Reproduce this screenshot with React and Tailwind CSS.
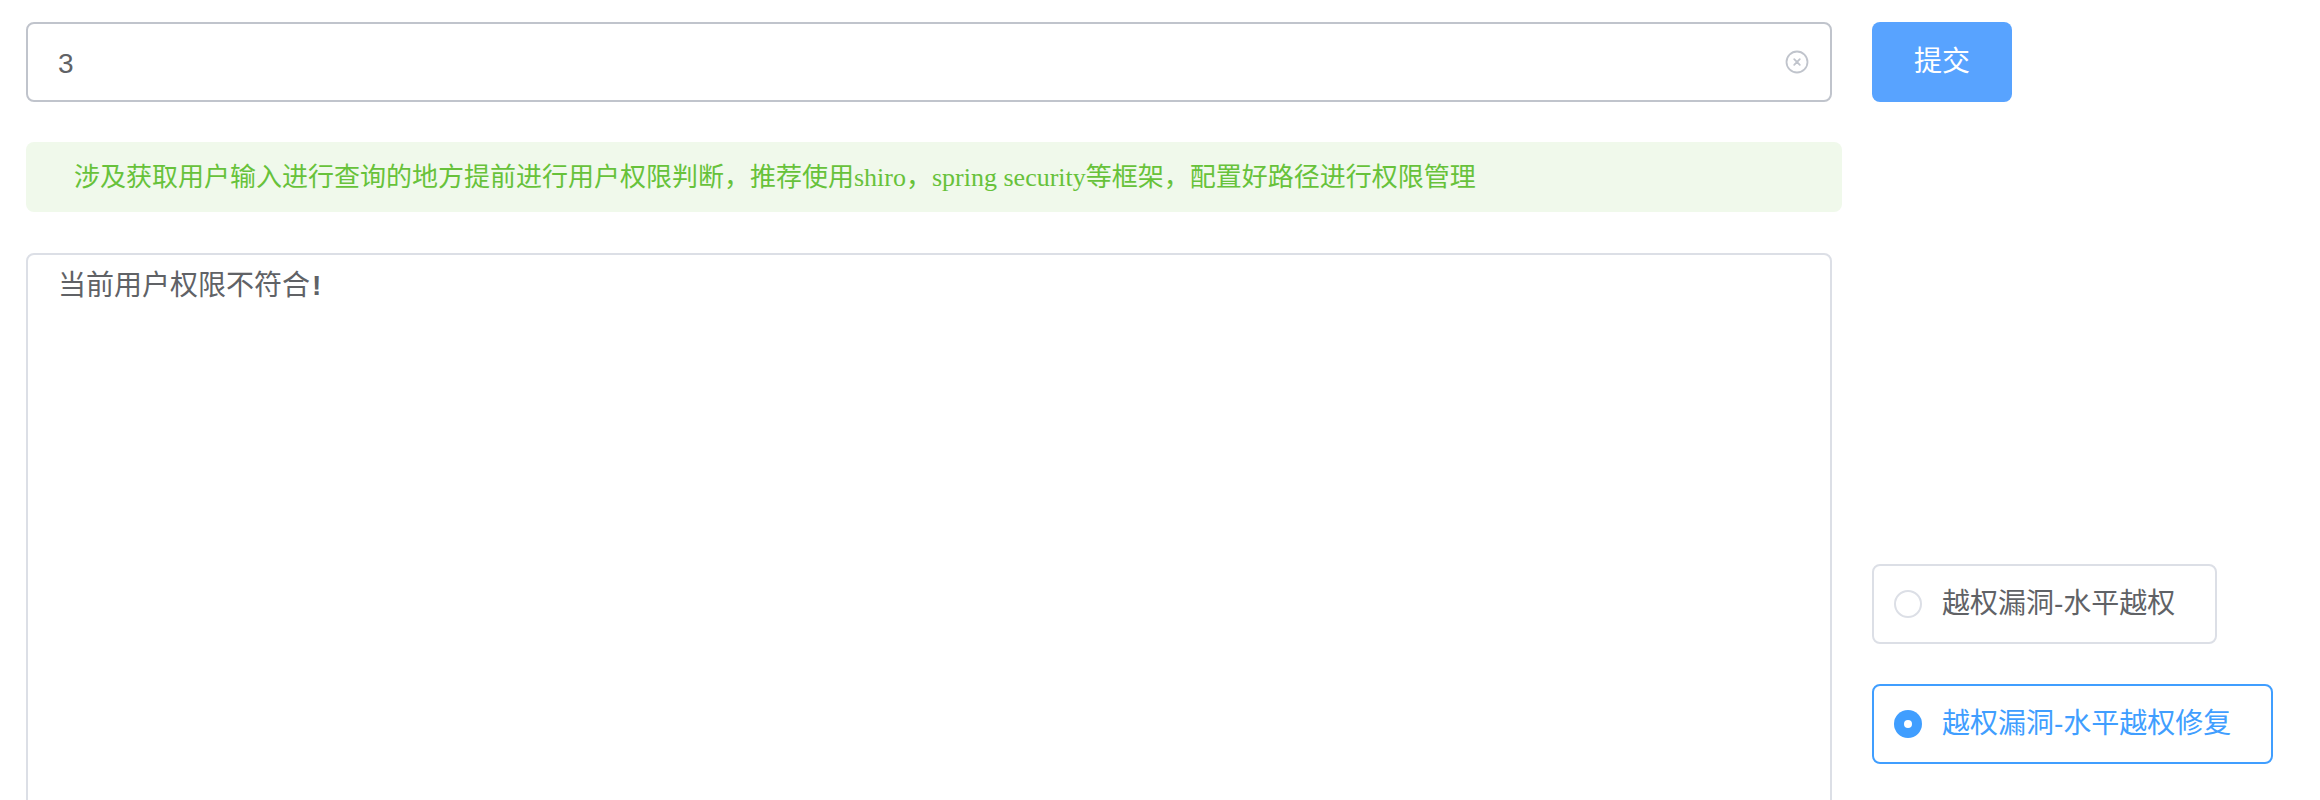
import React from "react";

const sans = { fontFamily: '"Helvetica Neue", "Liberation Sans", Arial, "Noto Sans CJK SC", sans-serif' };
const serif = { fontFamily: '"Liberation Serif", "Noto Sans CJK SC", serif' };

function ClearIcon() {
  return (
    <svg width="24" height="24" viewBox="0 0 24 24" fill="none" stroke="#c0c4cc" strokeWidth="1.8">
      <circle cx="12" cy="12" r="10.5" />
      <path d="M9.2 9.2 L14.8 14.8 M14.8 9.2 L9.2 14.8" strokeLinecap="round" />
    </svg>
  );
}

function Radio({ checked, label }) {
  return (
    <label
      className={`flex items-center h-[80px] pl-[20px] pr-[40px] rounded-[8px] border-2 w-fit ${
        checked ? "border-[#409eff]" : "border-[#dcdfe6]"
      }`}
    >
      <span
        className={`flex items-center justify-center w-[28px] h-[28px] rounded-full ${
          checked ? "bg-[#409eff]" : "border-2 border-[#dcdfe6] bg-white"
        }`}
      >
        {checked && <span className="block w-[8px] h-[8px] rounded-full bg-white" />}
      </span>
      <span
        className={`ml-[20px] text-[28px] leading-none ${checked ? "text-[#409eff]" : "text-[#606266]"}`}
      >
        {label}
      </span>
    </label>
  );
}

export default function App() {
  return (
    <div className="w-[2320px] h-[800px] overflow-hidden bg-white flex pl-[26px] pt-[22px]" style={sans}>
      <div className="flex flex-col w-[1816px] shrink-0">
        <div className="shrink-0 w-[1806px] h-[80px] border-2 border-[#c0c4cc] rounded-[8px] flex items-center pl-[30px] pr-[21px]">
          <span className="flex-1 text-[28px] text-[#606266] pt-[3px]">3</span>
          <ClearIcon />
        </div>
        <div className="shrink-0 mt-[40px] w-[1816px] h-[70px] bg-[#f0f9eb] rounded-[8px] flex items-center px-[48px]">
          <span className="text-[26px] text-[#67c23a]" style={serif}>
            涉及获取用户输入进行查询的地方提前进行用户权限判断，推荐使用shiro，spring security等框架，配置好路径进行权限管理
          </span>
        </div>
        <div className="shrink-0 mt-[41px] w-[1806px] h-[600px] border-2 border-[#dcdfe6] rounded-[8px] px-[30px] pt-[10px]">
          <div className="text-[28px] leading-[42px] text-[#606266]">当前用户权限不符合<span className="font-bold ml-[2px]">!</span></div>
        </div>
      </div>
      <div className="flex flex-col ml-[30px] shrink-0">
        <button className="shrink-0 w-[140px] h-[80px] rounded-[8px] bg-[#58a3ff] text-white text-[28px]">提交</button>
        <div className="mt-[462px] flex flex-col gap-[40px] shrink-0">
          <Radio checked={false} label="越权漏洞-水平越权" />
          <Radio checked={true} label="越权漏洞-水平越权修复" />
        </div>
      </div>
    </div>
  );
}
